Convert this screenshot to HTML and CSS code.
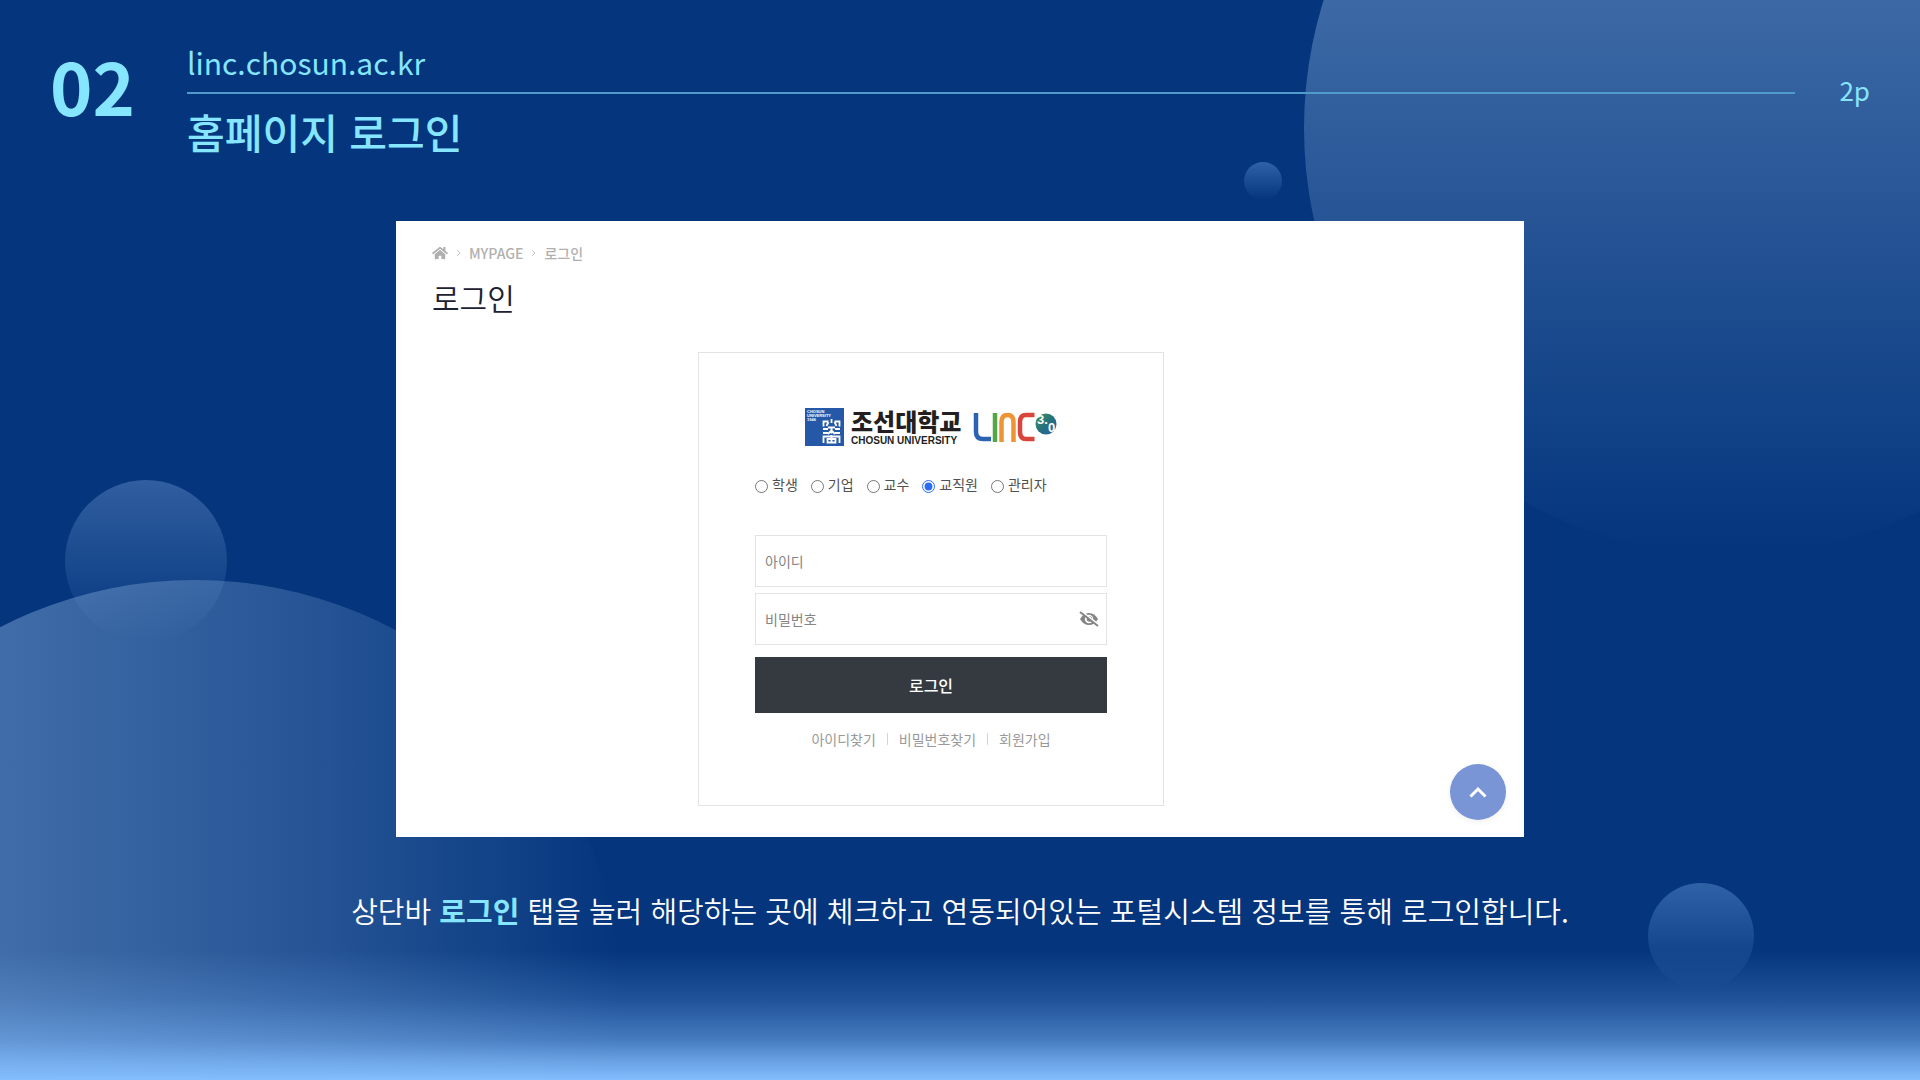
FILE: index.html
```html
<!DOCTYPE html>
<html lang="ko">
<head>
<meta charset="utf-8">
<title>홈페이지 로그인</title>
<meta name="viewport" content="width=device-width, initial-scale=1">
<link rel="stylesheet" href="styles.css">
</head>
<body>
<div class="slide">
  <div class="backdrop" aria-hidden="true">
    <span class="orb orb-corner"></span>
    <span class="orb orb-hill"></span>
    <span class="orb orb-left"></span>
    <span class="orb orb-dot"></span>
    <span class="orb orb-right"></span>
    <span class="glow"></span>
  </div>

  <header class="slide-header">
    <p class="chapter">02</p>
    <div class="heading">
      <p class="site">linc.chosun.ac.kr</p>
      <h1 class="title">홈페이지 로그인</h1>
    </div>
    <p class="page-number">2p</p>
  </header>

  <main class="slide-main">
    <section class="card">
      <nav class="breadcrumb" aria-label="현재 위치">
        <a href="#" class="home" aria-label="홈">
          <svg viewBox="0 0 576 512" width="16" height="14"><path fill="currentColor" d="M280 148L96 300v164a16 16 0 0 0 16 16l112-1a16 16 0 0 0 16-16v-95a16 16 0 0 1 16-16h64a16 16 0 0 1 16 16v95a16 16 0 0 0 16 16l112 1a16 16 0 0 0 16-16V300L296 148a12 12 0 0 0-16 0zM572 251l-84-69V44a12 12 0 0 0-12-12h-56a12 12 0 0 0-12 12v72l-90-74a48 48 0 0 0-61 0L4 251a12 12 0 0 0-1 17l25 31a12 12 0 0 0 17 2L280 107a12 12 0 0 1 16 0l235 194a12 12 0 0 0 17-2l26-31a12 12 0 0 0-2-17z"/></svg>
        </a>
        <svg class="sep" viewBox="0 0 5 8" width="5" height="8"><path d="M1 1l3 3-3 3" fill="none" stroke="currentColor"/></svg>
        <a href="#">MYPAGE</a>
        <svg class="sep" viewBox="0 0 5 8" width="5" height="8"><path d="M1 1l3 3-3 3" fill="none" stroke="currentColor"/></svg>
        <a href="#">로그인</a>
      </nav>
      <h2 class="card-title">로그인</h2>

      <form class="login">
        <svg class="logo" viewBox="0 0 252 40" width="252" height="40" role="img" aria-label="조선대학교 LINC 3.0">
          <defs>
            <linearGradient id="globe" x1="0" y1="0" x2="1" y2="1">
              <stop offset="0" stop-color="#3f9a5c"/>
              <stop offset="0.5" stop-color="#26717d"/>
              <stop offset="1" stop-color="#2b5fa5"/>
            </linearGradient>
          </defs>
          <rect x="0" y="1" width="39" height="38" fill="#2559a8"/>
          <g class="logo-mini"><text x="2" y="6">CHOSUN</text><text x="2" y="10">UNIVERSITY</text><text x="2" y="14">1946</text></g>
          <g fill="none" stroke="#fff" stroke-width="1.800">
            <path d="M18.500 19.500v-5h5M34.500 19.500v-5h-5M26.500 12v4M23.500 15l-2 4M29.500 15l2 4"/>
            <path d="M18 22h5M30 22h5M18 26h5M30 26h5M23 20.500h7M26.500 20.500v6M23 27l3-3M30 27l-3-3"/>
            <path d="M18.500 36v-6.500h16V36M26.500 28v7M22.500 32h8v3.500h-8z"/>
          </g>
          <text class="logo-ko" x="46" y="24">조선대학교</text>
          <text class="logo-en" x="46" y="37">CHOSUN UNIVERSITY</text>
          <g fill="none" stroke-width="4.500">
            <path d="M171 6v19q0 7 7 7h8" stroke="#2b63b0"/>
            <path d="M190 6v29" stroke="#55a646"/>
            <path d="M196.500 35V15q0-7 6-7t6 7v20" stroke="#ee9433"/>
            <path d="M229.500 8H221q-6 0-6 7v10q0 7 6 7h8.500" stroke="#d8453c"/>
          </g>
          <circle cx="241" cy="17" r="10.500" fill="url(#globe)"/>
          <text class="logo-ver" x="232" y="17">3.</text>
          <text class="logo-ver" x="243" y="25">0</text>
        </svg>

        <fieldset class="roles">
          <label><input type="radio" name="role">학생</label>
          <label><input type="radio" name="role">기업</label>
          <label><input type="radio" name="role">교수</label>
          <label><input type="radio" name="role" checked>교직원</label>
          <label><input type="radio" name="role">관리자</label>
        </fieldset>

        <div class="fields">
          <input class="field" type="text" placeholder="아이디" aria-label="아이디">
          <div class="password">
            <input class="field" type="password" placeholder="비밀번호" aria-label="비밀번호">
            <button class="reveal" type="button" aria-label="비밀번호 표시">
              <svg viewBox="0 0 20 16" width="20" height="16"><path d="M1 8q3.500-6 9-6t9 6q-3.500 6-9 6t-9-6z" fill="#858585"/><circle cx="10" cy="8" r="4.200" fill="#fff"/><circle cx="10.500" cy="8" r="2.800" fill="#858585"/><path d="M2 0l18 14" stroke="#fff" stroke-width="2"/><path d="M1 1l18 14" stroke="#858585" stroke-width="2"/></svg>
            </button>
          </div>
        </div>

        <button class="submit" type="submit">로그인</button>

        <nav class="links" aria-label="계정">
          <a href="#">아이디찾기</a>
          <a href="#">비밀번호찾기</a>
          <a href="#">회원가입</a>
        </nav>
      </form>

      <button class="to-top" type="button" aria-label="맨 위로">
        <svg viewBox="0 0 18 12" width="18" height="12"><path d="M1.500 10.500L9 3l7.500 7.500" fill="none" stroke="#fff" stroke-width="3"/></svg>
      </button>
    </section>

    <p class="caption">상단바 <strong>로그인</strong> 탭을 눌러 해당하는 곳에 체크하고 연동되어있는 포털시스템 정보를 통해 로그인합니다.</p>
  </main>
</div>
</body>
</html>
```
FILE: styles.css
```css
*, *::before, *::after { box-sizing: border-box; }

body, p, h1, h2, fieldset { margin: 0; padding: 0; }

body {
  background: #04357d;
  font-family: "Noto Sans CJK KR", sans-serif;
}

a { color: inherit; text-decoration: none; }
svg { display: block; }
button, input { font: inherit; }

.slide {
  position: relative;
  min-height: 100vh;
  overflow: hidden;
  padding: 40px 50px;
}

/* Decorative background */
.backdrop { position: absolute; inset: 0; }

.orb {
  position: absolute;
  border-radius: 50%;
  background: linear-gradient(rgba(110, 165, 230, 0.4), rgba(110, 165, 230, 0));
}
.orb-corner {
  width: 854px; height: 854px; right: -238px; top: -299px;
  background: linear-gradient(rgba(164, 201, 240, 0.54), rgba(164, 201, 240, 0));
}
.orb-hill {
  width: 854px; height: 854px; left: -232px; bottom: -354px;
  background: linear-gradient(to right, rgba(164, 201, 240, 0.5), rgba(164, 201, 240, 0.2) 66%, rgba(164, 201, 240, 0));
}
.orb-left {
  width: 162px; height: 162px; left: 65px; top: 480px;
  background: linear-gradient(rgba(150, 190, 240, 0.3), rgba(150, 190, 240, 0));
}
.orb-dot { width: 38px; height: 38px; right: 638px; top: 162px; }
.orb-right { width: 106px; height: 106px; right: 166px; bottom: 91px; }

.glow {
  position: absolute;
  left: 0; right: 0; bottom: 0;
  height: 130px;
  background: linear-gradient(rgba(132, 190, 255, 0), rgba(132, 190, 255, 0.21) 38%, rgba(132, 190, 255, 0.51) 69%, rgba(132, 190, 255, 0.78) 85%, #84beff);
}

/* Header */
.slide-header {
  position: relative;
  display: flex;
  align-items: flex-start;
  color: #86e5ff;
}
.chapter { width: 137px; font-size: 72px; line-height: 90px; font-weight: 700; }
.heading { flex: 1; }
.site {
  height: 54px;
  font-size: 30px;
  line-height: 44px;
  border-bottom: 2px solid #4f9bcb;
}
.title { font-size: 41px; line-height: 74px; font-weight: 500; }
.page-number { padding-left: 44px; font-size: 26px; line-height: 100px; }

/* Card */
.slide-main { position: relative; display: flex; flex-direction: column; align-items: center; }

.card {
  position: relative;
  width: 100%;
  max-width: 1128px;
  margin-top: 53px;
  padding: 20px 94px 31px 36px;
  background: #fff;
}

.breadcrumb {
  display: flex;
  align-items: center;
  gap: 8px;
  font-size: 14px;
  line-height: 24px;
  font-weight: 500;
  color: #b0b0b0;
}
.sep { color: #c4c4c4; }
.card-title { margin-top: 8px; font-size: 30px; line-height: 48px; font-weight: 350; color: #1c2233; }

.login {
  display: flex;
  flex-direction: column;
  width: 466px;
  max-width: 100%;
  margin: 31px auto 0;
  padding: 54px 56px;
  border: 1px solid #e3e3e3;
}
.logo { align-self: center; overflow: visible; }
.logo-mini { font: 700 4px "Liberation Sans", sans-serif; fill: #fff; }
.logo-ko { font: 900 24px "Noto Sans CJK KR", sans-serif; fill: #231f20; }
.logo-en { font: 700 10px "Liberation Sans", sans-serif; fill: #231f20; }
.logo-ver { font: 700 13px "Liberation Sans", sans-serif; fill: #fff; }

.roles {
  display: flex;
  gap: 13px;
  margin-top: 25px;
  border: 0;
  font-size: 14px;
  line-height: 24px;
  color: #505050;
}
.roles label { display: flex; align-items: center; gap: 4px; }
.roles input { width: 13px; height: 13px; margin: 4px 0 0; accent-color: #2b6cf5; }

.fields { display: grid; gap: 6px; margin-top: 39px; }
.field {
  display: block;
  width: 100%;
  height: 52px;
  padding: 0 9px;
  border: 1px solid #e3e3e3;
  border-radius: 0;
  background: #fff;
  font-size: 14px;
  color: #333;
}
.field::placeholder { color: #858585; }
.password { position: relative; }
.reveal {
  position: absolute;
  top: 18px; right: 8px;
  padding: 0;
  border: 0;
  background: none;
}

.submit {
  height: 56px;
  margin-top: 12px;
  border: 0;
  background: #353a41;
  color: #fff;
  font-size: 16px;
  font-weight: 500;
}

.links {
  display: flex;
  justify-content: center;
  margin-top: 14px;
  font-size: 14px;
  line-height: 24px;
  color: #999;
}
.links a { display: flex; align-items: center; }
.links a + a::before {
  content: "";
  width: 1px;
  height: 12px;
  margin: 0 11px;
  background: #d5d5d5;
}

.to-top {
  position: absolute;
  right: 18px; bottom: 17px;
  display: grid;
  place-items: center;
  width: 56px;
  height: 56px;
  padding: 0;
  border: 0;
  border-radius: 50%;
  background: #7a95d5;
  box-shadow: 0 2px 6px rgba(0, 0, 0, 0.06);
}

.caption {
  margin-top: 49px;
  font-size: 29px;
  line-height: 48px;
  font-weight: 350;
  color: #fff;
  text-align: center;
}
.caption strong { font-weight: 700; color: #86e5ff; }
```
